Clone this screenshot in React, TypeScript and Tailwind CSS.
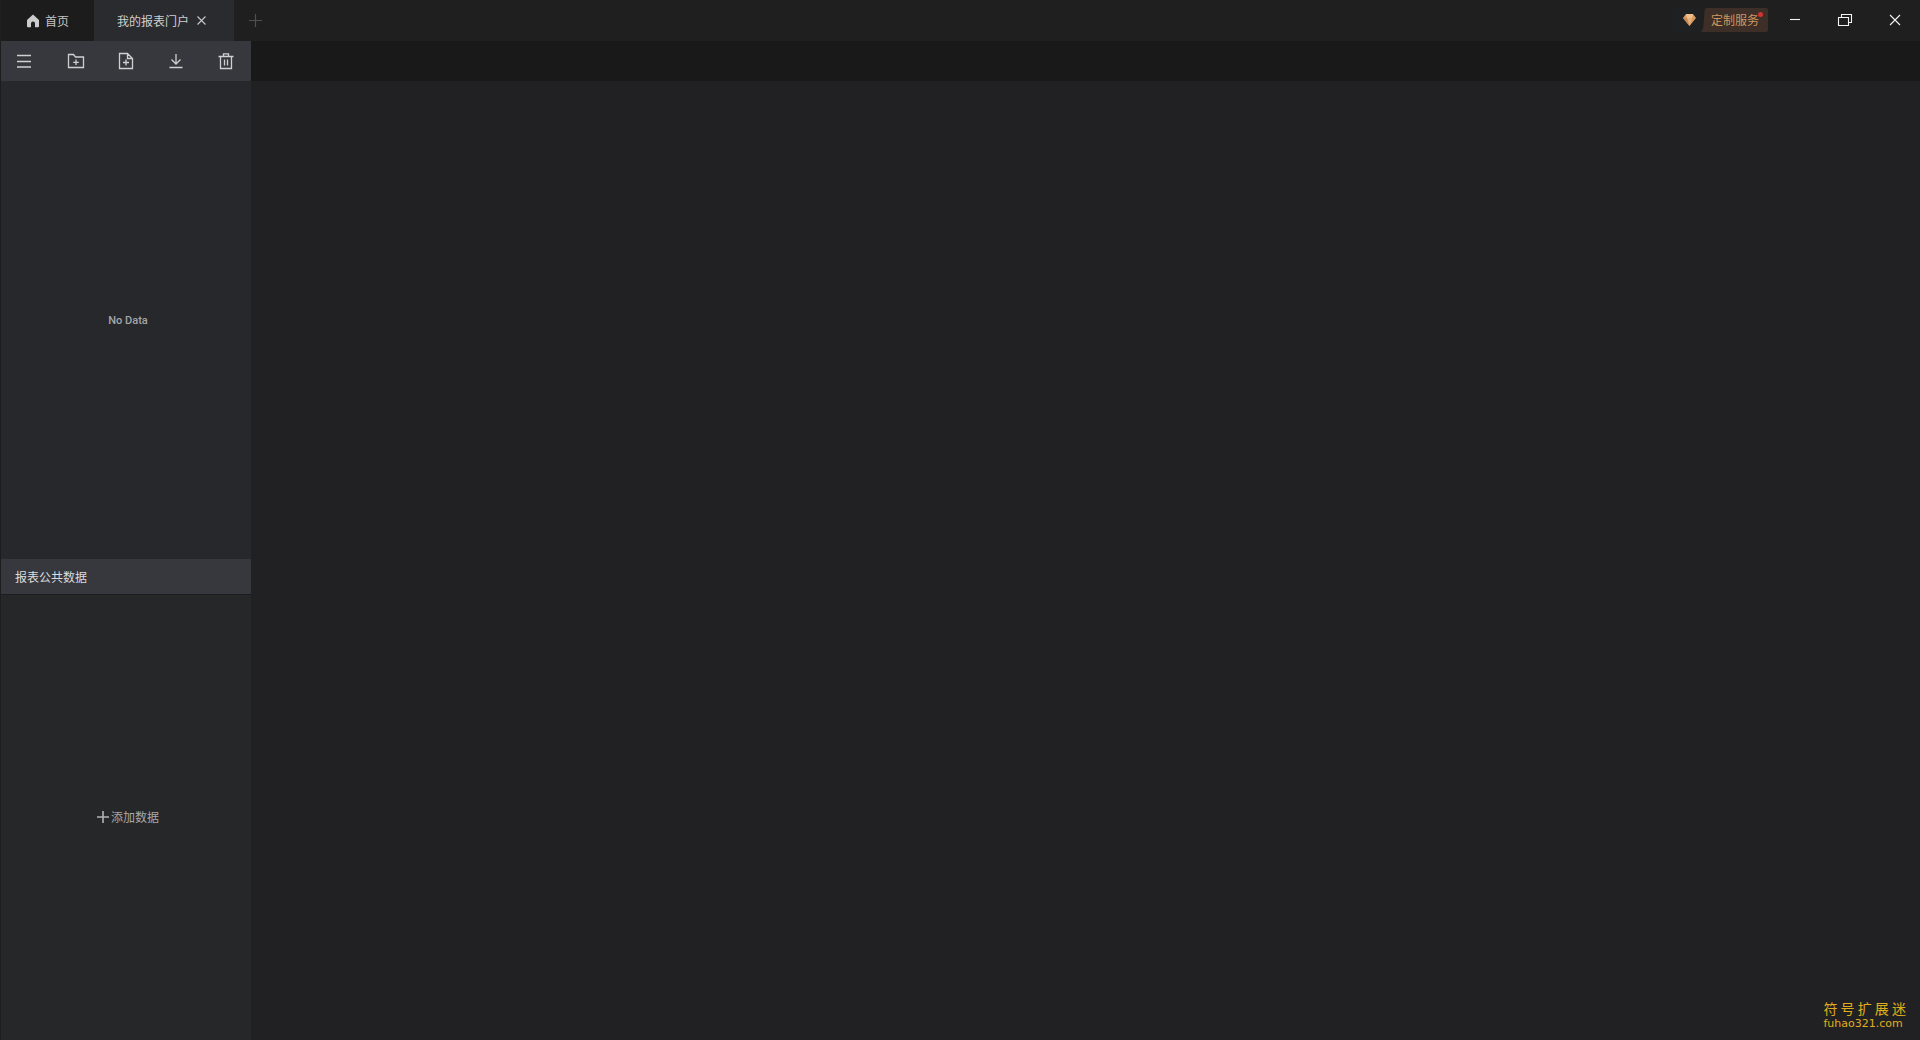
import type { ReactNode } from "react";

function ToolButton({ label, children }: { label: string; children: ReactNode }) {
  return (
    <button type="button" aria-label={label} title={label} className="flex h-10 items-center justify-center text-[#d0d0d2]">
      <svg className="overflow-visible" width="16" height="16" viewBox="0 0 16 16" fill="none" stroke="currentColor" strokeWidth="1.3">
        {children}
      </svg>
    </button>
  );
}

function WindowButton({ label, children }: { label: string; children: ReactNode }) {
  return (
    <button type="button" aria-label={label} className="flex h-full w-[50px] items-center justify-center text-[#f4f4f4]">
      <svg width="16" height="16" viewBox="0 0 16 16" fill="none" stroke="currentColor" strokeWidth="1.1">
        {children}
      </svg>
    </button>
  );
}

function TitleBar() {
  return (
    <header className="flex h-[41px] shrink-0 bg-[#1f1f1f]">
      <nav className="flex pl-px">
        <button type="button" className="flex w-[93px] items-center gap-1.5 bg-[#1c1c1c] pl-[26px] text-[#c4c4c4]">
          <svg width="12" height="14" viewBox="0 0 12 14" fill="#cccccc">
            <path d="M6 0.6 12 6v6.2a1 1 0 0 1-1 1H8V9.6a2 2 0 0 0-4 0v3.6H1a1 1 0 0 1-1-1V6z" />
          </svg>
          <span>首页</span>
        </button>
        <div className="flex w-[140px] items-center gap-2 bg-[#2a2b2f] pl-[23px] text-[#cfcfcf]">
          <button type="button">我的报表门户</button>
          <button type="button" aria-label="关闭标签">
            <svg width="9" height="9" viewBox="0 0 9 9" stroke="#c8c8c8" strokeWidth="1.1">
              <path d="M.5.5l8 8M8.5.5l-8 8" />
            </svg>
          </button>
        </div>
        <button type="button" aria-label="新建标签" className="flex w-[42px] items-center justify-center">
          <svg width="13" height="13" viewBox="0 0 13 13" stroke="#505050" strokeWidth="1.2">
            <path d="M6.5 0v13M0 6.5h13" />
          </svg>
        </button>
      </nav>
      <div className="ml-auto flex h-10">
        <button type="button" className="flex items-center text-[#cf9660]">
          <span className="flex h-6 w-[30px] items-center justify-center bg-[#1e2022] pl-1.5">
            <svg width="13" height="12" viewBox="0 0 13 12">
              <path d="M3 0h7l3 4-6.5 8L0 4z" fill="#d99a62" />
              <path d="M3 0h7L9 4H4z" fill="#eec08c" />
              <path d="M4 4h5l-2.5 8z" fill="#e6b07a" />
              <path d="M0 4h4l2.5 8z" fill="#c98950" />
            </svg>
          </span>
          <span className="relative mr-0.5 flex h-6 w-[67px] items-center pl-[10px]">
            <svg className="absolute inset-0" width="67" height="24" viewBox="0 0 67 24" fill="#3d2f27">
              <path d="M6 0h59a2 2 0 0 1 2 2v20a2 2 0 0 1-2 2H0q2-2 2.400-6L3.500 3Q3.800 0 6 0z" />
            </svg>
            <span className="relative">定制服务</span>
            <span className="absolute top-1 right-[5px] size-[5px] rounded-full bg-[#cf3434]" />
          </span>
        </button>
        <WindowButton label="最小化">
          <path d="M3 7.5h10" />
        </WindowButton>
        <WindowButton label="还原">
          <path d="M1.5 5.5h10v8h-10zM4.5 5.500v-3h10v8h-3" />
        </WindowButton>
        <WindowButton label="关闭">
          <path d="M3 3l10 10M13 3L3 13" />
        </WindowButton>
      </div>
    </header>
  );
}

function Sidebar() {
  return (
    <aside className="flex w-[251px] shrink-0 flex-col border-l border-[#1d1d1e]">
      <div className="grid h-10 shrink-0 grid-cols-5 bg-[#37383d]">
        <ToolButton label="菜单">
          <path d="M-1 2.500h14M-1 8.500h14M-1 14h14" />
        </ToolButton>
        <ToolButton label="新建文件夹">
          <path d="M.5 14.500V1.500h5l2 2.500h8v10.500zM8 6.500v5.500M5.200 9.300h5.600" />
        </ToolButton>
        <ToolButton label="新建文件">
          <path d="M1.500.5h8l5 5v10h-13zM9.500.5v5h5M8 6.500v6M5 9.500h6" />
        </ToolButton>
        <ToolButton label="下载">
          <path d="M8 1v10M3.500 6.500L8 11l4.500-4.500M1.500 14.500h13" />
        </ToolButton>
        <ToolButton label="删除">
          <path d="M.5 3.500h15M2.500 3.500v12h11v-12M5.500 3V.8h5V3M6.500 6.500v6M9.500 6.500v6" />
        </ToolButton>
      </div>
      <section className="flex flex-[479] items-center justify-center bg-[#27282c] pt-0.5 pl-1 font-['Roboto','Noto_Sans_CJK_SC',sans-serif] text-[11px] font-medium text-[#a6a6a8]">
        No Data
      </section>
      <h2 className="flex h-[35px] shrink-0 items-center bg-[#37383d] pl-3.5 text-[#dcdcdc]">报表公共数据</h2>
      <section className="flex flex-[445] items-center justify-center border-t border-[#1c1c1d] bg-[#262728] pb-0.5 pl-1">
        <button type="button" className="flex items-center gap-0.5 text-[#a8a8a8]">
          <svg width="12" height="12" viewBox="0 0 12 12" stroke="#b4b4b4" strokeWidth="1.6">
            <path d="M6 0v12M0 6h12" />
          </svg>
          添加数据
        </button>
      </section>
    </aside>
  );
}

export default function App() {
  return (
    <div className="flex h-screen flex-col overflow-hidden bg-[#212123] font-['Noto_Sans_CJK_SC',sans-serif] text-[12px] leading-4">
      <TitleBar />
      <div className="flex min-h-0 flex-1">
        <Sidebar />
        <main className="flex flex-1 flex-col">
          <div className="h-10 shrink-0 bg-[#191919]" />
          <div className="mt-auto flex flex-col self-end pr-3.5 pb-2 text-[#e0ae1c]">
            <span className="text-[14px] leading-4">符 号 扩 展 迷</span>
            <span className="font-['DejaVu_Sans',sans-serif] text-[11px] leading-4">fuhao321.com</span>
          </div>
        </main>
      </div>
    </div>
  );
}
